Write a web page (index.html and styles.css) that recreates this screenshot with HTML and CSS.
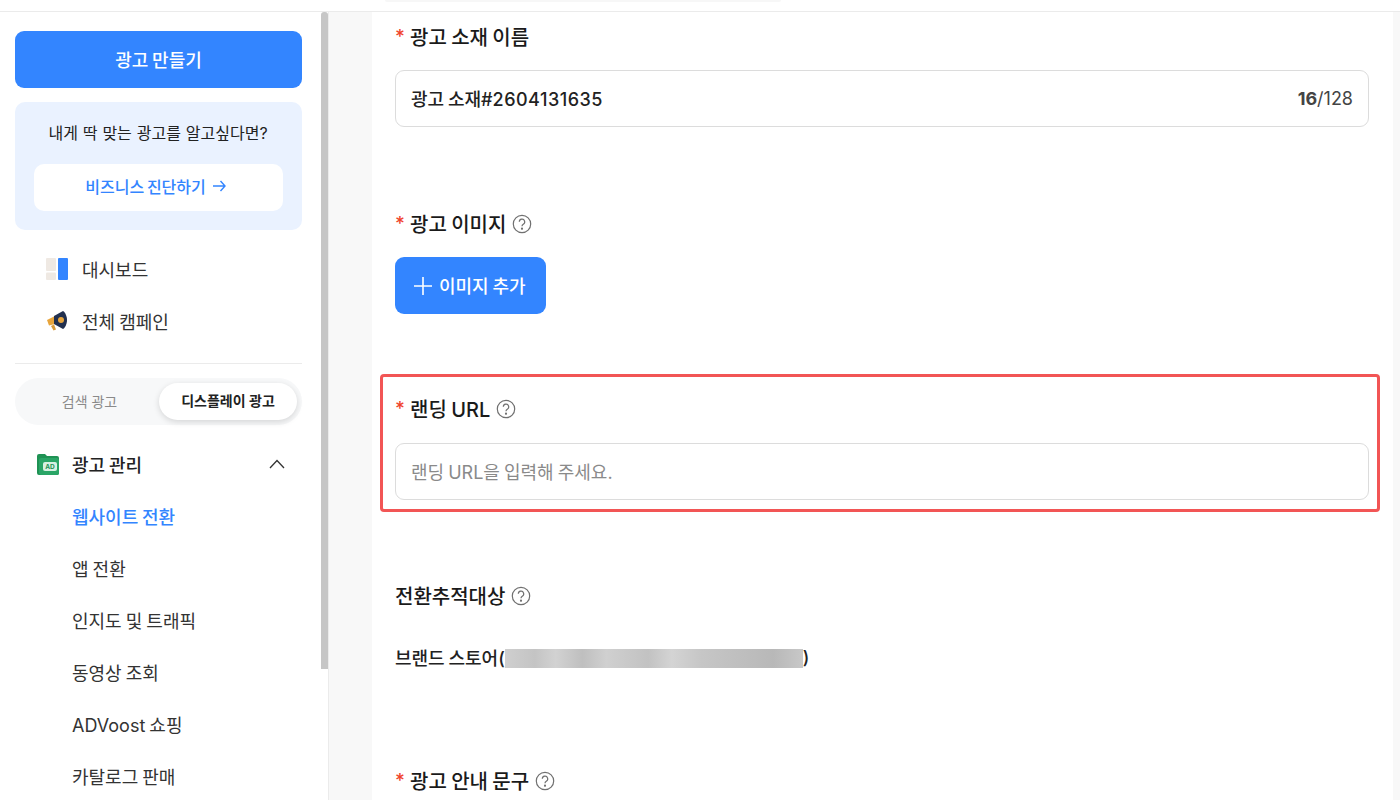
FILE: index.html
```html
<!DOCTYPE html>
<html lang="ko">
<head>
    <meta charset="UTF-8">
    <link rel="stylesheet" href="styles.css">
    <title>광고 만들기</title>
</head>
<body>

    <!-- 상단 바 -->
    <header class="topbar"><div class="topbar-pill"></div></header>

    <div class="layout">
        <!-- 사이드바 -->
        <aside class="sidebar">
            <div class="scrollbar"></div>
            <button class="create-button">광고 만들기</button>

            <div class="promo">
                <p class="promo-text">내게 딱 맞는 광고를 알고싶다면?</p>
                <a class="promo-link">비즈니스 진단하기
                    <svg width="14" height="14" viewBox="0 0 14 14" fill="none" stroke="#3385ff" stroke-width="1.400"><path d="M1 7h12M8.500 2 13 7l-4.500 5"/></svg>
                </a>
            </div>

            <nav class="main-menu">
                <a class="menu-item">
                    <svg class="menu-icon" width="24" height="24" viewBox="0 0 24 24"><rect x="1" y="1" width="10" height="13" rx="1" fill="#efe9e3"/><rect x="1" y="15.500" width="10" height="7.500" rx="1" fill="#efe9e3"/><rect x="13" y="1" width="10" height="22" rx="1" fill="#3385ff"/></svg>
                    대시보드
                </a>
                <a class="menu-item">
                    <svg class="menu-icon" width="24" height="24" viewBox="0 0 24 24"><path d="M6 17l3-1.500 2 5-2.500 1z" fill="#d99a3a"/><path d="M2 11l8-4v8l-6 1.500z" fill="#e8a53c"/><path d="M9 7l9-5c2 1 4 5 4 9s-2 8-4 9l-9-5z" fill="#22304f"/><circle cx="16" cy="11" r="3" fill="#e8a53c"/></svg>
                    전체 캠페인
                </a>
            </nav>

            <div class="divider"></div>

            <div class="ad-toggle">
                <span class="toggle-option">검색 광고</span>
                <span class="toggle-option toggle-active">디스플레이 광고</span>
            </div>

            <div class="group-title">
                <svg class="group-icon" width="24" height="24" viewBox="0 0 24 24"><path d="M1 4a2 2 0 0 1 2-2h6l2 2h10a2 2 0 0 1 2 2v15a2 2 0 0 1-2 2H3a2 2 0 0 1-2-2z" fill="#1f9254"/><rect x="3" y="6" width="20" height="17" rx="2" fill="#2aa566"/><rect x="7" y="10" width="14" height="9" rx="2" fill="#d8f0e2"/><text x="14" y="17" font-size="6.500" font-weight="700" text-anchor="middle" fill="#1f9254" font-family="Inter">AD</text></svg>
                <span class="group-name">광고 관리</span>
                <svg class="chevron" width="16" height="10" viewBox="0 0 16 10" fill="none" stroke="#333" stroke-width="1.300"><path d="M1 9l7-7.500L15 9"/></svg>
            </div>
            <a class="sub-item sub-active">웹사이트 전환</a>
            <a class="sub-item">앱 전환</a>
            <a class="sub-item">인지도 및 트래픽</a>
            <a class="sub-item">동영상 조회</a>
            <a class="sub-item">ADVoost 쇼핑</a>
            <a class="sub-item">카탈로그 판매</a>
        </aside>

        <!-- 광고 소재 입력 폼 -->
        <main class="content">
            <section class="form-panel">
                <div class="field field-name">
                    <h3 class="field-label"><span class="required">*</span>광고 소재 이름</h3>
                    <div class="text-input">
                        <span class="input-value">광고 소재#<span class="digits">2604131635</span></span>
                        <span class="counter"><b>16</b>/128</span>
                    </div>
                </div>

                <div class="field field-image">
                    <h3 class="field-label"><span class="required">*</span>광고 이미지
                        <svg class="help" width="20" height="20" viewBox="0 0 20 20" fill="none" stroke="#707070" stroke-width="1.200"><circle cx="10" cy="10" r="8.700"/><path d="M7.300 7.800a2.700 2.700 0 1 1 4 2.400c-.9.500-1.300 1.100-1.300 2"/><circle cx="10" cy="14.700" r=".5" fill="#707070"/></svg>
                    </h3>
                    <button class="add-image">
                        <svg width="20" height="20" viewBox="0 0 20 20" fill="none" stroke="#fff" stroke-width="1.600"><path d="M10 1v18M1 10h18"/></svg>
                        <span class="add-image-text">이미지 추가</span>
                    </button>
                </div>

                <div class="field field-highlight">
                    <h3 class="field-label"><span class="required">*</span>랜딩 URL
                        <svg class="help" width="20" height="20" viewBox="0 0 20 20" fill="none" stroke="#707070" stroke-width="1.200"><circle cx="10" cy="10" r="8.700"/><path d="M7.300 7.800a2.700 2.700 0 1 1 4 2.400c-.9.500-1.300 1.100-1.300 2"/><circle cx="10" cy="14.700" r=".5" fill="#707070"/></svg>
                    </h3>
                    <div class="text-input">
                        <span class="input-placeholder">랜딩 URL을 입력해 주세요.</span>
                    </div>
                </div>

                <div class="field field-tracking">
                    <h3 class="field-label">전환추적대상
                        <svg class="help" width="20" height="20" viewBox="0 0 20 20" fill="none" stroke="#707070" stroke-width="1.200"><circle cx="10" cy="10" r="8.700"/><path d="M7.300 7.800a2.700 2.700 0 1 1 4 2.400c-.9.500-1.300 1.100-1.300 2"/><circle cx="10" cy="14.700" r=".5" fill="#707070"/></svg>
                    </h3>
                    <p class="tracking-value">브랜드 스토어(<span class="blurred"></span>)</p>
                </div>

                <div class="field">
                    <h3 class="field-label"><span class="required">*</span>광고 안내 문구
                        <svg class="help" width="20" height="20" viewBox="0 0 20 20" fill="none" stroke="#707070" stroke-width="1.200"><circle cx="10" cy="10" r="8.700"/><path d="M7.300 7.800a2.700 2.700 0 1 1 4 2.400c-.9.500-1.300 1.100-1.300 2"/><circle cx="10" cy="14.700" r=".5" fill="#707070"/></svg>
                    </h3>
                </div>
            </section>
        </main>
    </div>

</body>
</html>
```

FILE: styles.css
```css
* {
    box-sizing: border-box;
}

html, body {
    height: 100%;
}

body {
    margin: 0;
    overflow: hidden;
    background-color: #fff;
    color: #1a1a1a;
    font-family: Inter, "Noto Sans CJK KR", sans-serif;
    word-spacing: -1px;
}

h3, p {
    margin: 0;
}

button {
    border: 0;
    font-family: inherit;
    word-spacing: inherit;
}

/* 상단 바 */
.topbar {
    height: 12px;
    border-bottom: 1px solid #ebebeb;
    background-color: #fff;
    padding-left: 385px;
}

.topbar-pill {
    width: 396px;
    height: 2px;
    background-color: #f7f7f7;
    border-radius: 0 0 6px 6px;
}

.layout {
    display: flex;
    height: 788px;
}

/* 사이드바 */
.sidebar {
    position: relative;
    width: 329px;
    flex-shrink: 0;
    height: 100%;
    overflow: hidden;
    padding: 19px 26px 0 15px;
    background-color: #fff;
    border-right: 1px solid #ebebeb;
}

.scrollbar {
    position: absolute;
    top: 0;
    right: 0;
    width: 7px;
    height: 657px;
    background-color: #c6c6c6;
    border-radius: 3px 3px 0 0;
}

.create-button {
    display: block;
    width: 100%;
    height: 57px;
    padding-bottom: 2px;
    border-radius: 9px;
    background-color: #3385ff;
    color: #fff;
    font-size: 18px;
    font-weight: 500;
}

.promo {
    margin-top: 14px;
    height: 128px;
    padding: 19px 19px 0;
    border-radius: 10px;
    background-color: #eaf2ff;
    text-align: center;
}

.promo-text {
    font-size: 16px;
    line-height: 24px;
    color: #222;
    white-space: nowrap;
    word-spacing: 0.4px;
    margin-right: 1px;
}

.promo-link {
    display: flex;
    align-items: center;
    justify-content: center;
    gap: 6px;
    height: 47px;
    margin-top: 19px;
    padding: 0 6px 4px 0;
    border-radius: 10px;
    background-color: #fff;
    color: #3385ff;
    font-size: 16px;
    font-weight: 500;
    word-spacing: -1.500px;
}

.main-menu {
    padding: 13px 0 16px;
}

.menu-item {
    display: flex;
    align-items: center;
    height: 52px;
    padding-left: 30px;
    font-size: 18px;
    color: #333;
}

.menu-icon {
    margin-right: 13px;
}

.divider {
    height: 1px;
    background-color: #ebebeb;
}

.ad-toggle {
    display: flex;
    align-items: center;
    justify-content: space-between;
    height: 47px;
    margin-top: 14px;
    padding-right: 5px;
    border-radius: 24px;
    background-color: #f7f8f9;
    word-spacing: 0;
}

.toggle-option {
    flex-shrink: 0;
    width: 144px;
    padding: 0 0 2px 5px;
    text-align: center;
    font-size: 14px;
    color: #8a8a8a;
}

.toggle-active {
    width: 138px;
    height: 37px;
    padding: 0;
    line-height: 35px;
    border-radius: 19px;
    background-color: #fff;
    box-shadow: 0 2px 6px rgba(0, 0, 0, 0.14);
    color: #222;
    font-weight: 600;
}

.group-title {
    display: flex;
    align-items: center;
    height: 52px;
    margin-top: 13px;
    padding-left: 21px;
}

.group-icon {
    margin-right: 12px;
}

.group-name {
    flex: 1;
    font-size: 18px;
    font-weight: 500;
    color: #222;
}

.chevron {
    margin-right: 17px;
}

.sub-item {
    display: flex;
    align-items: center;
    height: 52px;
    padding-left: 57px;
    font-size: 18px;
    color: #333;
}

.sub-active {
    color: #3385ff;
    font-weight: 500;
}

/* 본문 */
.content {
    flex: 1;
    height: 100%;
    overflow: hidden;
    padding: 0 7px 0 43px;
    background-color: #f8f8f8;
}

.form-panel {
    height: 100%;
    padding: 9px 24px 0 23px;
    background-color: #fff;
}

.field {
    margin-bottom: 80px;
}

.field-name {
    margin-bottom: 81px;
}

.field-image {
    margin-bottom: 79px;
}

.field-label {
    display: flex;
    align-items: center;
    height: 30px;
    margin-bottom: 19px;
    font-size: 20px;
    font-weight: 500;
    color: #1a1a1a;
}

.required {
    width: 15px;
    color: #f0442e;
    font-size: 19px;
}

.help {
    margin: 2px 0 0 6px;
}

.text-input {
    display: flex;
    align-items: center;
    justify-content: space-between;
    height: 57px;
    padding: 0 15px 2px;
    border: 1px solid #dcdcdc;
    border-radius: 9px;
    background-color: #fff;
    font-size: 18px;
}

.input-value {
    font-weight: 500;
    color: #222;
}

.digits {
    letter-spacing: 0.5px;
}

.input-placeholder {
    color: #8a8a8a;
}

.counter {
    margin-top: 2px;
    color: #444;
}

.add-image {
    display: flex;
    align-items: center;
    gap: 6px;
    height: 57px;
    padding: 0 20px 0 18px;
    border-radius: 9px;
    background-color: #3385ff;
    color: #fff;
    font-size: 18px;
    font-weight: 500;
}

.add-image-text {
    margin-bottom: 2px;
}

/* 빨간 강조 박스 */
.field-highlight {
    margin: -19px -11px 68px -15px;
    padding: 16px 8px 9px 12px;
    border: 3px solid #f25555;
    border-radius: 4px;
}

.field-highlight .field-label {
    margin-bottom: 20px;
}

.field-tracking {
    margin-bottom: 96px;
}

.field-tracking .field-label {
    margin-bottom: 35px;
}

.tracking-value {
    display: flex;
    align-items: center;
    height: 24px;
    font-size: 18px;
    font-weight: 500;
    color: #222;
}

.blurred {
    display: inline-block;
    width: 298px;
    height: 19px;
    margin-top: 2px;
    background: linear-gradient(90deg, #cfcfcf, #c4c4c4 10%, #d2d2d2 17%, #bfbfbf 26%, #d0d0d0 34%, #c2c2c2 48%, #d4d4d4 56%, #c6c6c6 66%, #bdbdbd 82%, #b8b8b8 90%, #c8c8c8);
}
```
